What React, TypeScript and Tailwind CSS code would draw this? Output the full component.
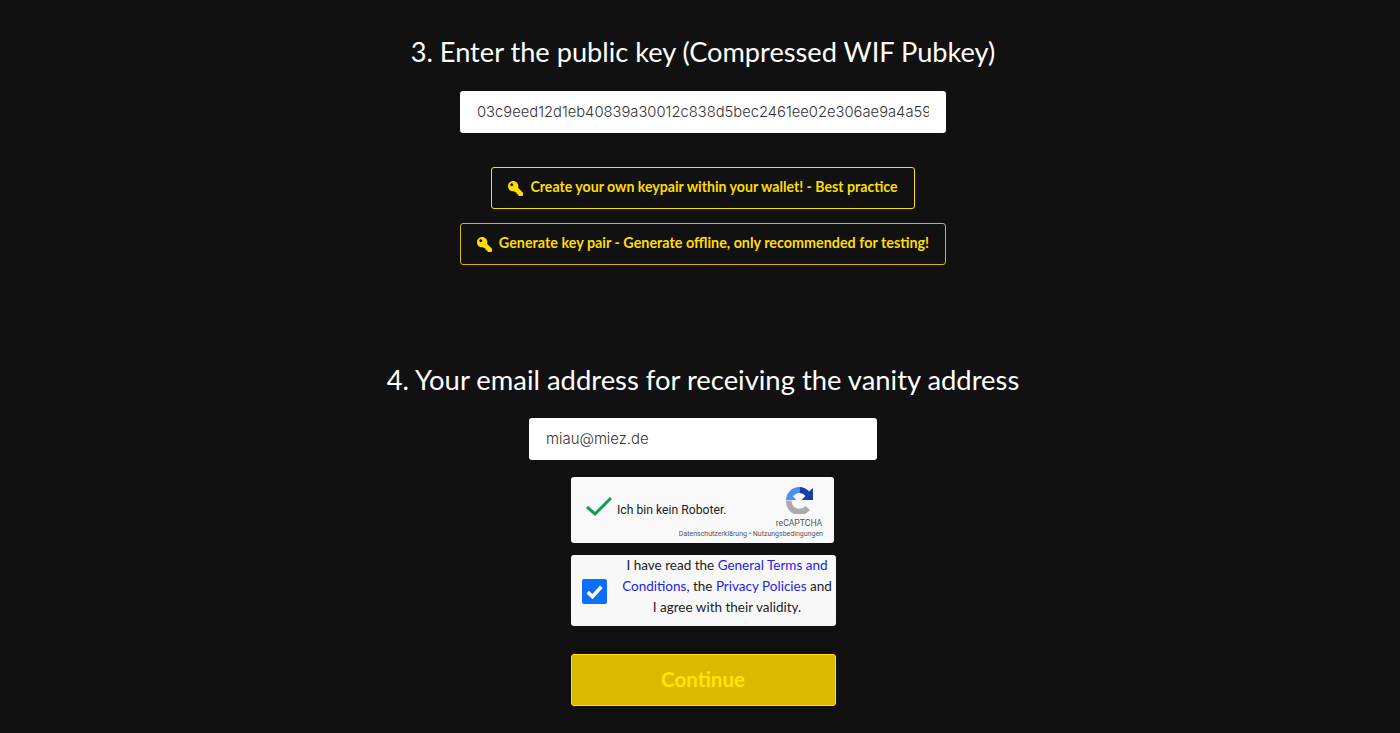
import { FaKey } from "react-icons/fa";

const HEADING = "font-['Lato',sans-serif] leading-[36px] text-white text-center";
const INPUT = "h-[42px] bg-white rounded-[3px] pl-[17px] pr-[17px] flex items-center overflow-hidden font-['Inter',sans-serif] font-light text-[#333] whitespace-nowrap";
const KEY_BTN = "h-[42px] flex items-center justify-center rounded-[3px] border pb-[3px] font-['Lato',sans-serif] font-bold text-[#ffdd00] bg-[#111]";

function KeyIcon() {
  return <FaKey className="w-[15px] h-[15px] mr-[7px] mt-[3px] -scale-x-100 text-[#ffdd00]" />;
}

function RecaptchaLogo() {
  return (
    <svg viewBox="0 0 27 27" className="w-[27px] h-[27px]">
      <path d="M0 13.500H5.500A8 8 0 0 0 19.500 19L24 23A13.500 13.500 0 0 1 0 13.500Z" fill="#ababab" />
      <path d="M13.500 0V6A8 8 0 0 0 7 9.500L10.500 13H0A13.500 13.500 0 0 1 13.500 0Z" fill="#4a90f5" />
      <path d="M13.500 0A13.500 13.500 0 0 1 23 4.500L27 1V13H15.500L19.500 9A8 8 0 0 0 13.500 6Z" fill="#1c3aa9" />
    </svg>
  );
}

export default function App() {
  return (
    <div className="h-[733px] overflow-hidden bg-[#111111] pl-[6px] flex flex-col items-center">
      <h2 className={`${HEADING} text-[27.2px] mt-[34px]`}>3. Enter the public key (Compressed WIF Pubkey)</h2>
      <div className={`${INPUT} w-[486px] mt-[21px] text-[14.75px]`}>
        <span className="block overflow-hidden w-full">03c9eed12d1eb40839a30012c838d5bec2461ee02e306ae9a4a59</span>
      </div>

      <button className={`${KEY_BTN} w-[424px] mt-[34px] border-[#ffdd00] text-[14.15px]`}>
        <KeyIcon />
        Create your own keypair within your wallet! - Best practice
      </button>
      <button className={`${KEY_BTN} w-[486px] mt-[14px] border-[#d9b800] text-[14.35px]`}>
        <KeyIcon />
        Generate key pair - Generate offline, only recommended for testing!
      </button>

      <h2 className={`${HEADING} text-[27.4px] mt-[97px]`}>4. Your email address for receiving the vanity address</h2>
      <div className={`${INPUT} w-[348px] mt-[20px] text-[14.9px]`}>miau@miez.de</div>

      <div className="w-[263px] h-[66px] ml-[-1px] mt-[17px] bg-[#f9f9f9] rounded-[3px] relative font-['Roboto',sans-serif] text-[#222]">
        <svg viewBox="0 0 26 20" className="absolute left-[15px] top-[20px] w-[26px] h-[20px]">
          <path d="M1 10l8 7L25 1" fill="none" stroke="#0f9d58" strokeWidth="3" />
        </svg>
        <span className="absolute left-[46px] top-[25px] text-[12.2px] leading-[16px]">Ich bin kein Roboter.</span>
        <div className="absolute right-[10px] top-[10px] w-[50px] flex flex-col items-center">
          <RecaptchaLogo />
          <span className="text-[8.600px] leading-[10px] mt-[4px] text-[#555]">reCAPTCHA</span>
        </div>
        <span className="absolute right-[11px] top-[53px] text-[7px] leading-[8px] text-[#555] whitespace-nowrap">
          Datenschutzerklärung • Nutzungsbedingungen
        </span>
      </div>

      <div className="w-[265px] h-[71px] mt-[12px] bg-[#f8f8f8] rounded-[3px] flex items-center font-['Lato',sans-serif] text-[13.500px] leading-[21px] text-[#222]">
        <div className="w-[25px] h-[25px] ml-[11px] mt-[2px] shrink-0 bg-[#0d6efd] rounded-[2px] flex items-center justify-center">
          <svg viewBox="0 0 20 20" className="w-[21px] h-[21px]">
            <path d="M3.500 10.500l4.500 4.500 8.500-9.500" fill="none" stroke="#fff" strokeWidth="3.400" />
          </svg>
        </div>
        <p className="flex-1 text-center pl-[14px] pr-[2px] pb-[8px]">
          I have read the <span className="text-[#2222ee]">General Terms and Conditions</span>, the{" "}
          <span className="text-[#2222ee]">Privacy Policies</span> and I agree with their validity.
        </p>
      </div>

      <button className="w-[265px] h-[52px] mt-[28px] pb-[2px] bg-[#dbb900] border border-[#ffe600] rounded-[3px] font-['Lato',sans-serif] font-bold text-[20.5px] text-[#ffe600]">
        Continue
      </button>
    </div>
  );
}
